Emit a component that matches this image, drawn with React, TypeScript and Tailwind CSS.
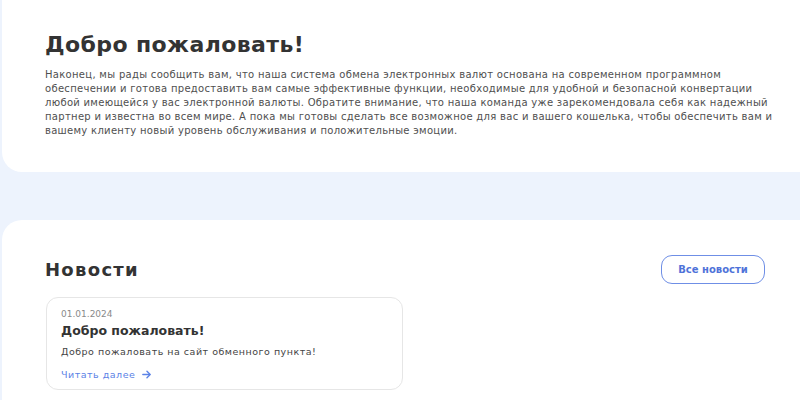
import React from 'react';

const font = { fontFamily: '"DejaVu Sans", "Noto Sans", sans-serif' };

const ArrowRight: React.FC = () => (
  <svg width="11" height="11" viewBox="0 0 24 24" fill="none" stroke="currentColor" strokeWidth="3" strokeLinecap="round" strokeLinejoin="round">
    <path d="M4 12h15" />
    <path d="M13 5l7 7-7 7" />
  </svg>
);

const lines = [
  'Наконец, мы рады сообщить вам, что наша система обмена электронных валют основана на современном программном',
  'обеспечении и готова предоставить вам самые эффективные функции, необходимые для удобной и безопасной конвертации',
  'любой имеющейся у вас электронной валюты. Обратите внимание, что наша команда уже зарекомендовала себя как надежный',
  'партнер и известна во всем мире. А пока мы готовы сделать все возможное для вас и вашего кошелька, чтобы обеспечить вам и',
  'вашему клиенту новый уровень обслуживания и положительные эмоции.',
];

const App: React.FC = () => {
  return (
    <div className="h-[400px] w-[800px] overflow-hidden bg-[#edf3fd] pl-[2px]" style={font}>
      <section className="-mt-[20px] h-[192px] w-[830px] rounded-[20px] bg-white pl-[43px] pt-[51px]">
        <h1 className="text-[22px] font-bold leading-[28px] tracking-[0.4px] text-[#333333]">Добро пожаловать!</h1>
        <p className="mt-[9px] text-[10px] leading-[14px] tracking-[0.3px] whitespace-nowrap text-[#4f4f4f]">
          {lines.map((l) => (
            <span key={l} className="block">
              {l}
            </span>
          ))}
        </p>
      </section>

      <section className="mt-[48px] h-[200px] w-[830px] rounded-[20px] bg-white pl-[43px] pt-[35px]">
        <div className="flex w-[720px] items-center justify-between">
          <h2 className="text-[18px] font-bold leading-[28px] tracking-[1.3px] text-[#333333]">Новости</h2>
          <button className="flex h-[29px] w-[104px] items-center justify-center rounded-[11px] border-[1.5px] border-[#6f8fe6] text-[10px] font-bold text-[#4f73d9]">
            Все новости
          </button>
        </div>
        <div className="mt-[13px] ml-[1px] h-[93px] w-[357px] rounded-[12px] border border-[#e6e6e6] px-[14px] pt-[10px]">
          <div className="text-[9px] leading-[12px] text-[#8a8a8a]">01.01.2024</div>
          <div className="mt-[2px] text-[12.5px] font-bold leading-[17px] text-[#333333]">Добро пожаловать!</div>
          <div className="mt-[6px] text-[9.5px] leading-[13px] tracking-[0.5px] text-[#444444]">Добро пожаловать на сайт обменного пункта!</div>
          <a className="mt-[10px] flex items-center gap-[6px] text-[9.5px] leading-[13px] tracking-[0.5px] text-[#5b82e6]">
            Читать далее <ArrowRight />
          </a>
        </div>
      </section>
    </div>
  );
};

export default App;
